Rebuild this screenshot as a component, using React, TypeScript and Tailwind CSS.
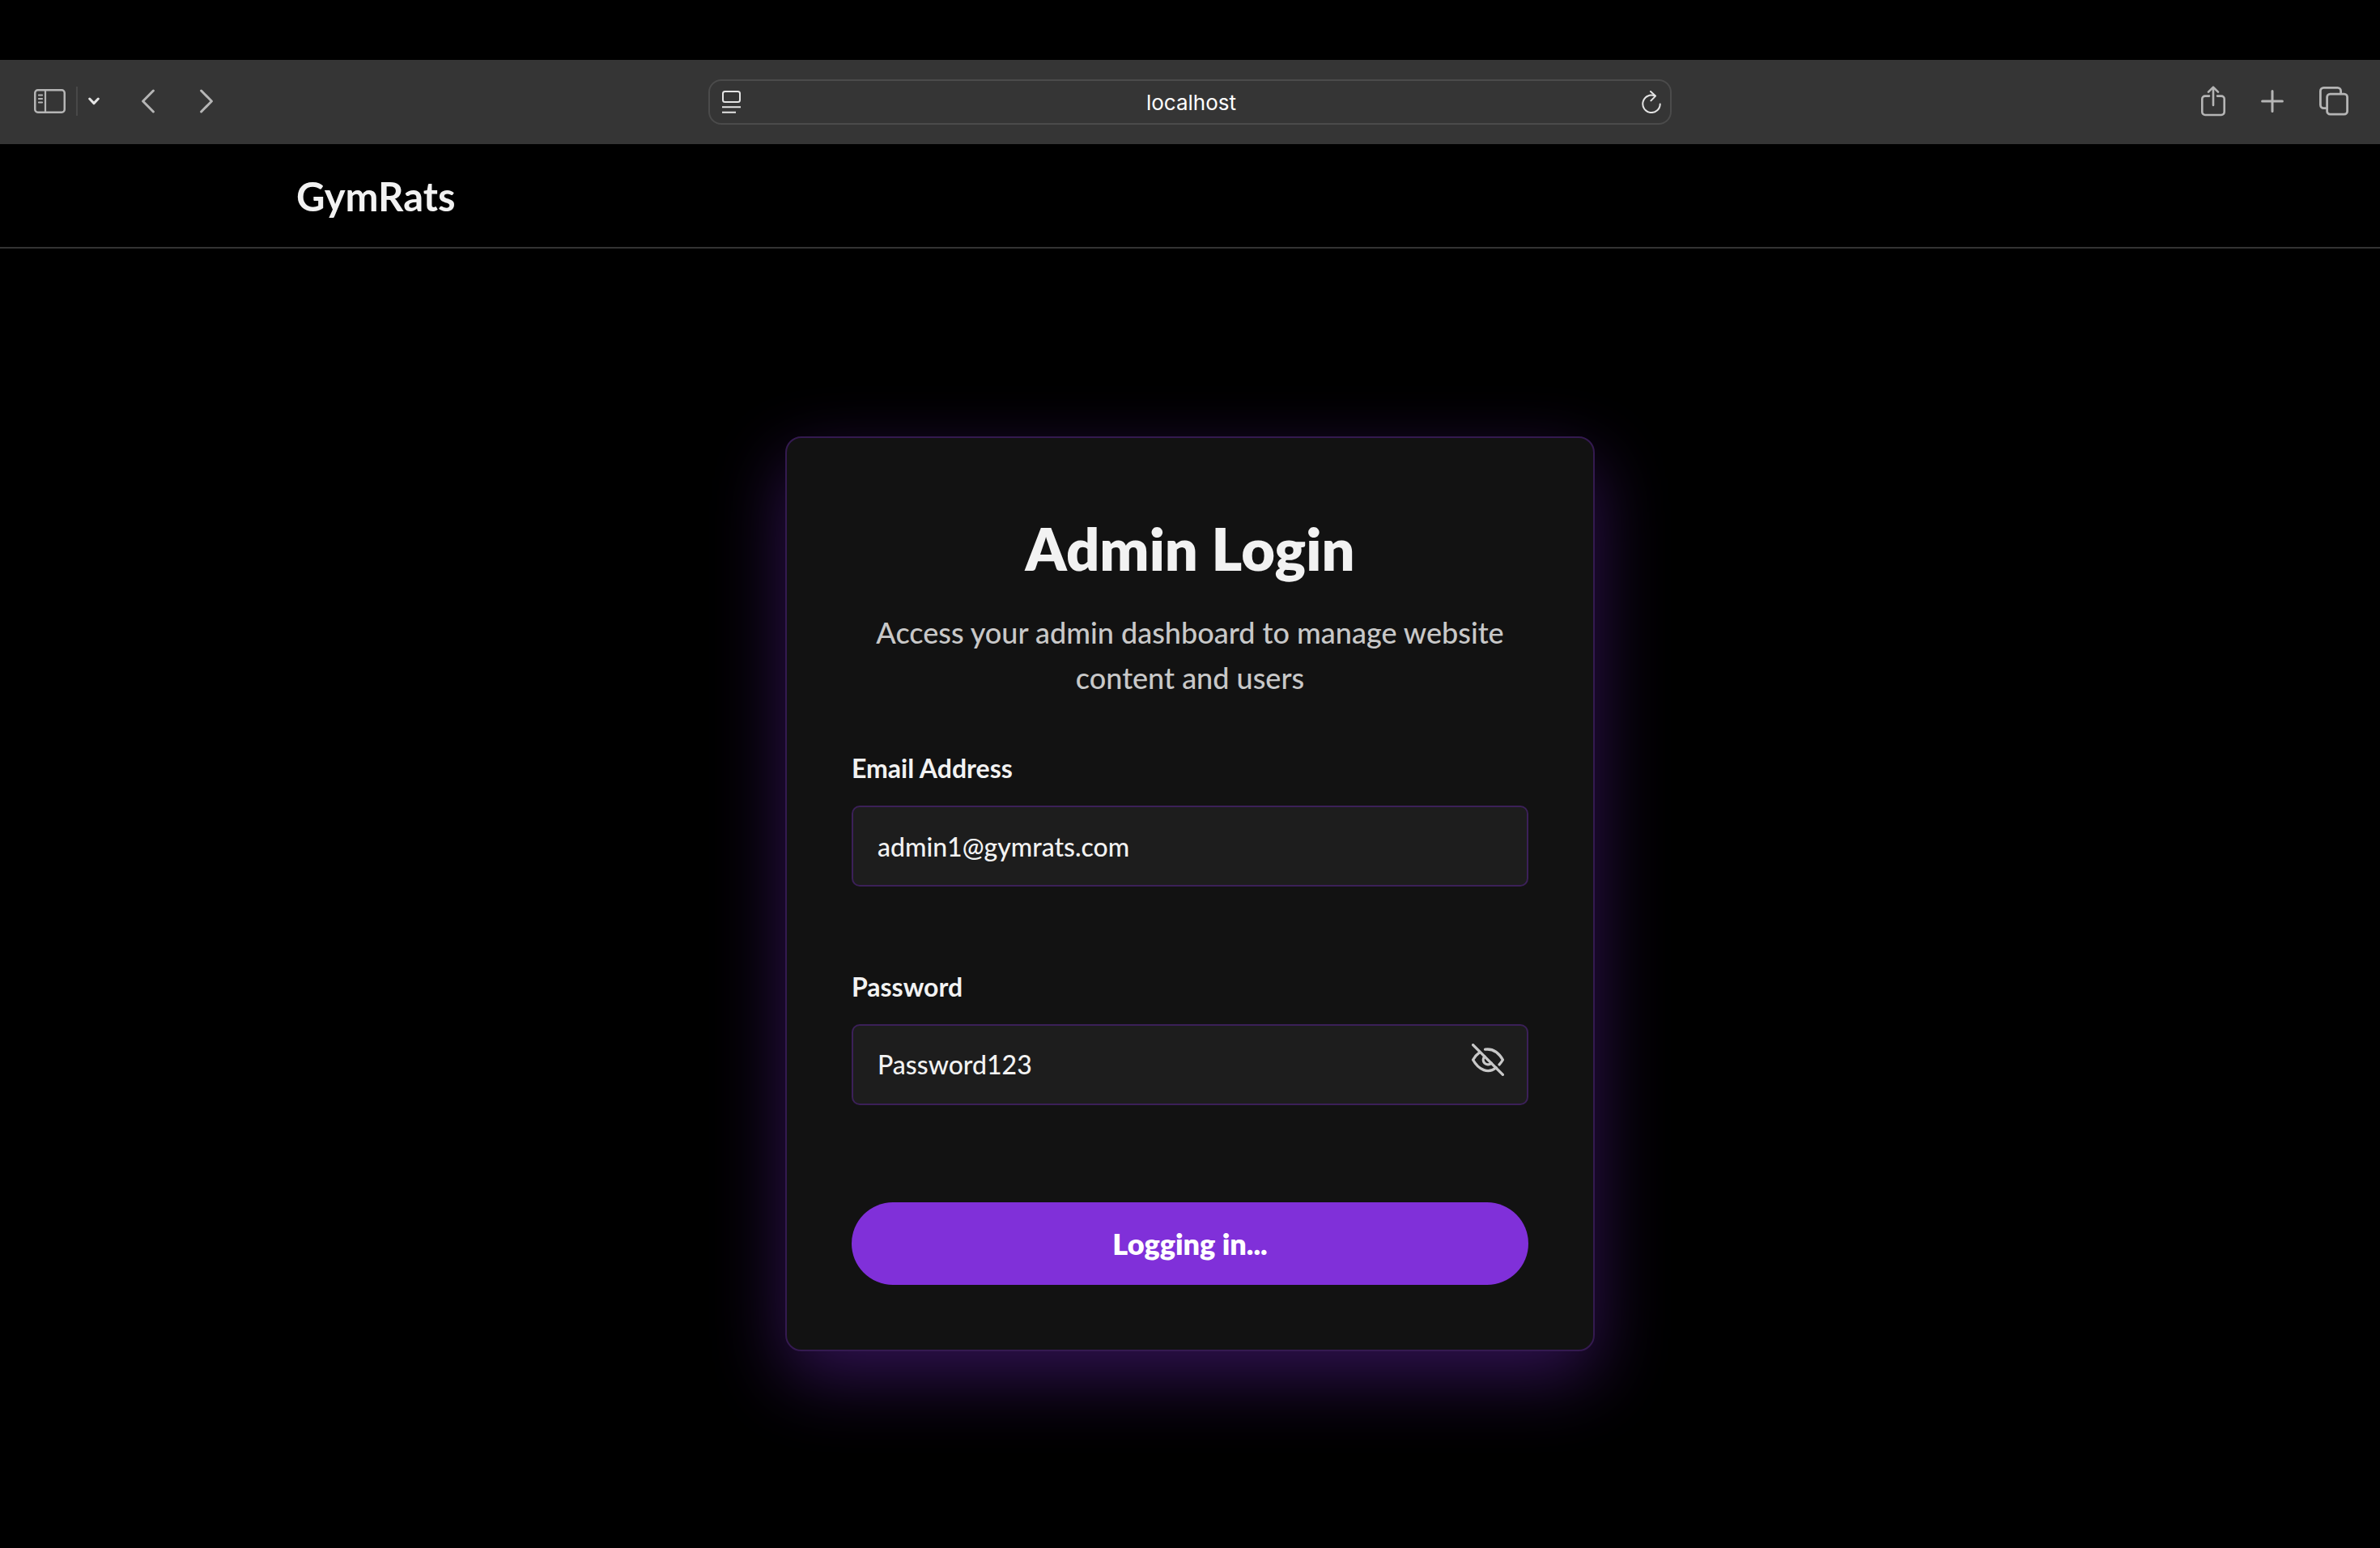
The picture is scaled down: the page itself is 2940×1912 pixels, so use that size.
import { useState } from "react";

function SidebarIcon() {
  return (
    <svg width="39" height="30" viewBox="0 0 39 30" fill="none" stroke="currentColor" strokeLinecap="round">
      <rect x="1.25" y="1.25" width="36.5" height="27.5" rx="3.5" strokeWidth="2.5" />
      <path d="M14 1.5v27" strokeWidth="2.2" />
      <path d="M5.8 7.5h4.4M5.8 12h4.4M5.8 16.5h4.4" strokeWidth="1.8" />
    </svg>
  );
}

function ChevronDownIcon() {
  return (
    <svg width="14" height="10" viewBox="0 0 14 10" fill="none" stroke="#e4e4e4" strokeWidth="3" strokeLinecap="round" strokeLinejoin="round">
      <path d="M1.7 2 7 7.6 12.3 2" />
    </svg>
  );
}

function BackIcon() {
  return (
    <svg width="16" height="30" viewBox="0 0 16 30" fill="none" stroke="currentColor" strokeWidth="3" strokeLinecap="round" strokeLinejoin="round">
      <path d="M14.4 2 1.6 15l12.8 13" />
    </svg>
  );
}

function ForwardIcon() {
  return (
    <svg width="16" height="30" viewBox="0 0 16 30" fill="none" stroke="currentColor" strokeWidth="3" strokeLinecap="round" strokeLinejoin="round">
      <path d="m1.6 2 12.800 13-12.800 13" />
    </svg>
  );
}

function ReaderIcon() {
  return (
    <svg width="23" height="28" viewBox="0 0 23 28" fill="none" stroke="currentColor" strokeWidth="2">
      <rect x="1" y="1" width="21" height="13" rx="2.5" />
      <path d="M0 20.2h23M0 26.8h17" />
    </svg>
  );
}

function ReloadIcon() {
  return (
    <svg width="24" height="28" viewBox="0 0 24 28" fill="none" stroke="currentColor" strokeWidth="2" strokeLinecap="round" strokeLinejoin="round">
      <path d="M16 6.4A10.7 10.7 0 1 0 22.7 16.6" />
      <path d="M11 1l6 5.6-5.6 5.8" />
    </svg>
  );
}

function ShareIcon() {
  return (
    <svg width="30" height="38" viewBox="0 0 30 38" fill="none" stroke="currentColor" strokeWidth="2.6" strokeLinecap="round" strokeLinejoin="round">
      <path d="M10 12.600H5a3.700 3.700 0 0 0-3.700 3.700v16A3.700 3.700 0 0 0 5 36h20a3.700 3.700 0 0 0 3.700-3.700v-16a3.700 3.700 0 0 0-3.700-3.700h-5" />
      <path d="M15 24V1.800M9 7.600l6-6 6 6" />
    </svg>
  );
}

function PlusIcon() {
  return (
    <svg width="28" height="28" viewBox="0 0 28 28" fill="none" stroke="currentColor" strokeWidth="3" strokeLinecap="round">
      <path d="M14 1.6v24.8M1.6 14h24.8" />
    </svg>
  );
}

function TabsIcon() {
  return (
    <svg width="36" height="36" viewBox="0 0 36 36" fill="none" stroke="currentColor" strokeWidth="2.8">
      <rect x="9.6" y="9.2" width="25" height="25" rx="3.8" />
      <path d="M9.6 26.6H5.4a4 4 0 0 1-4-4V5.4a4 4 0 0 1 4-4h17.2a4 4 0 0 1 4 4v3.8" />
    </svg>
  );
}

function EyeOffIcon() {
  return (
    <svg width="40" height="40" viewBox="0 0 40 40" fill="none" stroke="currentColor" strokeWidth="3.3" strokeLinecap="round" strokeLinejoin="round">
      <path d="m1.6 1.6 36.8 36.8" />
      <path d="M16.6 7.2c8.800-1.200 16.600 3.800 21.800 12.800-1.300 2.200-2.700 4.200-4.300 5.900" />
      <path d="M10 10.600C6.700 12.900 3.900 16.100 1.600 20c7 12.700 19 17.600 28.600 9.700" />
      <path d="M16 16c-2.300 2.200-2.300 5.800-.1 8.100 2.300 2.200 6 2.200 8.300-.1" />
    </svg>
  );
}

function BrowserBar() {
  return (
    <header className="grid h-[104px] grid-cols-[1fr_minmax(0,1190px)_1fr] items-center bg-[#353535] text-[#b5b5b5]">
      <div className="flex items-center pb-0.5 pl-[42px]">
        <button type="button" aria-label="Show sidebar"><SidebarIcon /></button>
        <span className="ml-[13px] h-9 w-0.5 bg-[#484848]" />
        <button type="button" aria-label="Tab groups" className="ml-[13px]"><ChevronDownIcon /></button>
        <button type="button" aria-label="Back" className="ml-[52px]"><BackIcon /></button>
        <button type="button" aria-label="Forward" className="ml-14"><ForwardIcon /></button>
      </div>
      <div className="flex h-14 items-center rounded-2xl border-2 border-[#4b4b4b] pr-[11px] pl-[15px] text-[#e4e4e4]">
        <button type="button" aria-label="Reader view"><ReaderIcon /></button>
        <input
          aria-label="Address"
          defaultValue="localhost"
          className="min-w-0 flex-1 bg-transparent text-center font-['Inter',sans-serif] text-[26px] text-white outline-none"
        />
        <button type="button" aria-label="Reload"><ReloadIcon /></button>
      </div>
      <div className="flex items-center justify-end pr-[39px] pb-0.5">
        <button type="button" aria-label="Share"><ShareIcon /></button>
        <button type="button" aria-label="New tab" className="ml-11"><PlusIcon /></button>
        <button type="button" aria-label="Tab overview" className="ml-11"><TabsIcon /></button>
      </div>
    </header>
  );
}

function LoginCard() {
  const [email, setEmail] = useState("admin1@gymrats.com");
  const [password, setPassword] = useState("Password123");
  const [visible, setVisible] = useState(true);

  return (
    <form
      onSubmit={(e) => e.preventDefault()}
      className="w-full max-w-[1000px] rounded-[20px] border-2 border-[#341a50] bg-[#121212] p-20 shadow-[0_32px_90px_rgba(128,48,217,0.38)]"
    >
      <h1 className="text-center text-[72px] leading-[112px] font-extrabold">Admin Login</h1>
      <p className="mt-5 text-center text-[36px] leading-[56px] font-medium text-[#c8c8c8]">
        Access your admin dashboard to manage website content and users
      </p>

      <label htmlFor="email" className="mt-[58px] block text-[32px] leading-[52px] font-bold">Email Address</label>
      <input
        id="email"
        type="email"
        value={email}
        onChange={(e) => setEmail(e.target.value)}
        className="mt-5 block h-[100px] w-full rounded-[10px] border-2 border-[#3b2058] bg-[#1d1d1d] px-[30px] text-[32px] font-medium outline-none"
      />

      <label htmlFor="password" className="mt-[98px] block text-[32px] leading-[52px] font-bold">Password</label>
      <div className="mt-5 flex h-[100px] rounded-[10px] border-2 border-[#3b2058] bg-[#1d1d1d] pr-7 pl-[30px]">
        <input
          id="password"
          type={visible ? "text" : "password"}
          value={password}
          onChange={(e) => setPassword(e.target.value)}
          className="min-w-0 flex-1 bg-transparent text-[32px] font-medium outline-none"
        />
        <button
          type="button"
          aria-label="Toggle password visibility"
          onClick={() => setVisible(!visible)}
          className="mb-3 text-[#c8c8c8]"
        >
          <EyeOffIcon />
        </button>
      </div>

      <button type="submit" className="mt-[120px] block h-[102px] w-full rounded-full bg-[#8030d9] text-[36px] font-extrabold text-white">
        Logging in...
      </button>
    </form>
  );
}

export default function App() {
  return (
    <div className="flex min-h-screen flex-col bg-black font-['Lato',sans-serif] text-[#f2f2f2]">
      <div className="h-[74px]" />
      <BrowserBar />
      <nav className="border-b-2 border-[#333333]">
        <div className="mx-auto flex h-[127px] max-w-[2400px] items-center px-24">
          <a href="#" className="text-[49px] leading-[64px] font-bold">GymRats</a>
        </div>
      </nav>
      <main className="flex flex-1 items-start justify-center px-8 pt-[232px] pb-40">
        <LoginCard />
      </main>
    </div>
  );
}
